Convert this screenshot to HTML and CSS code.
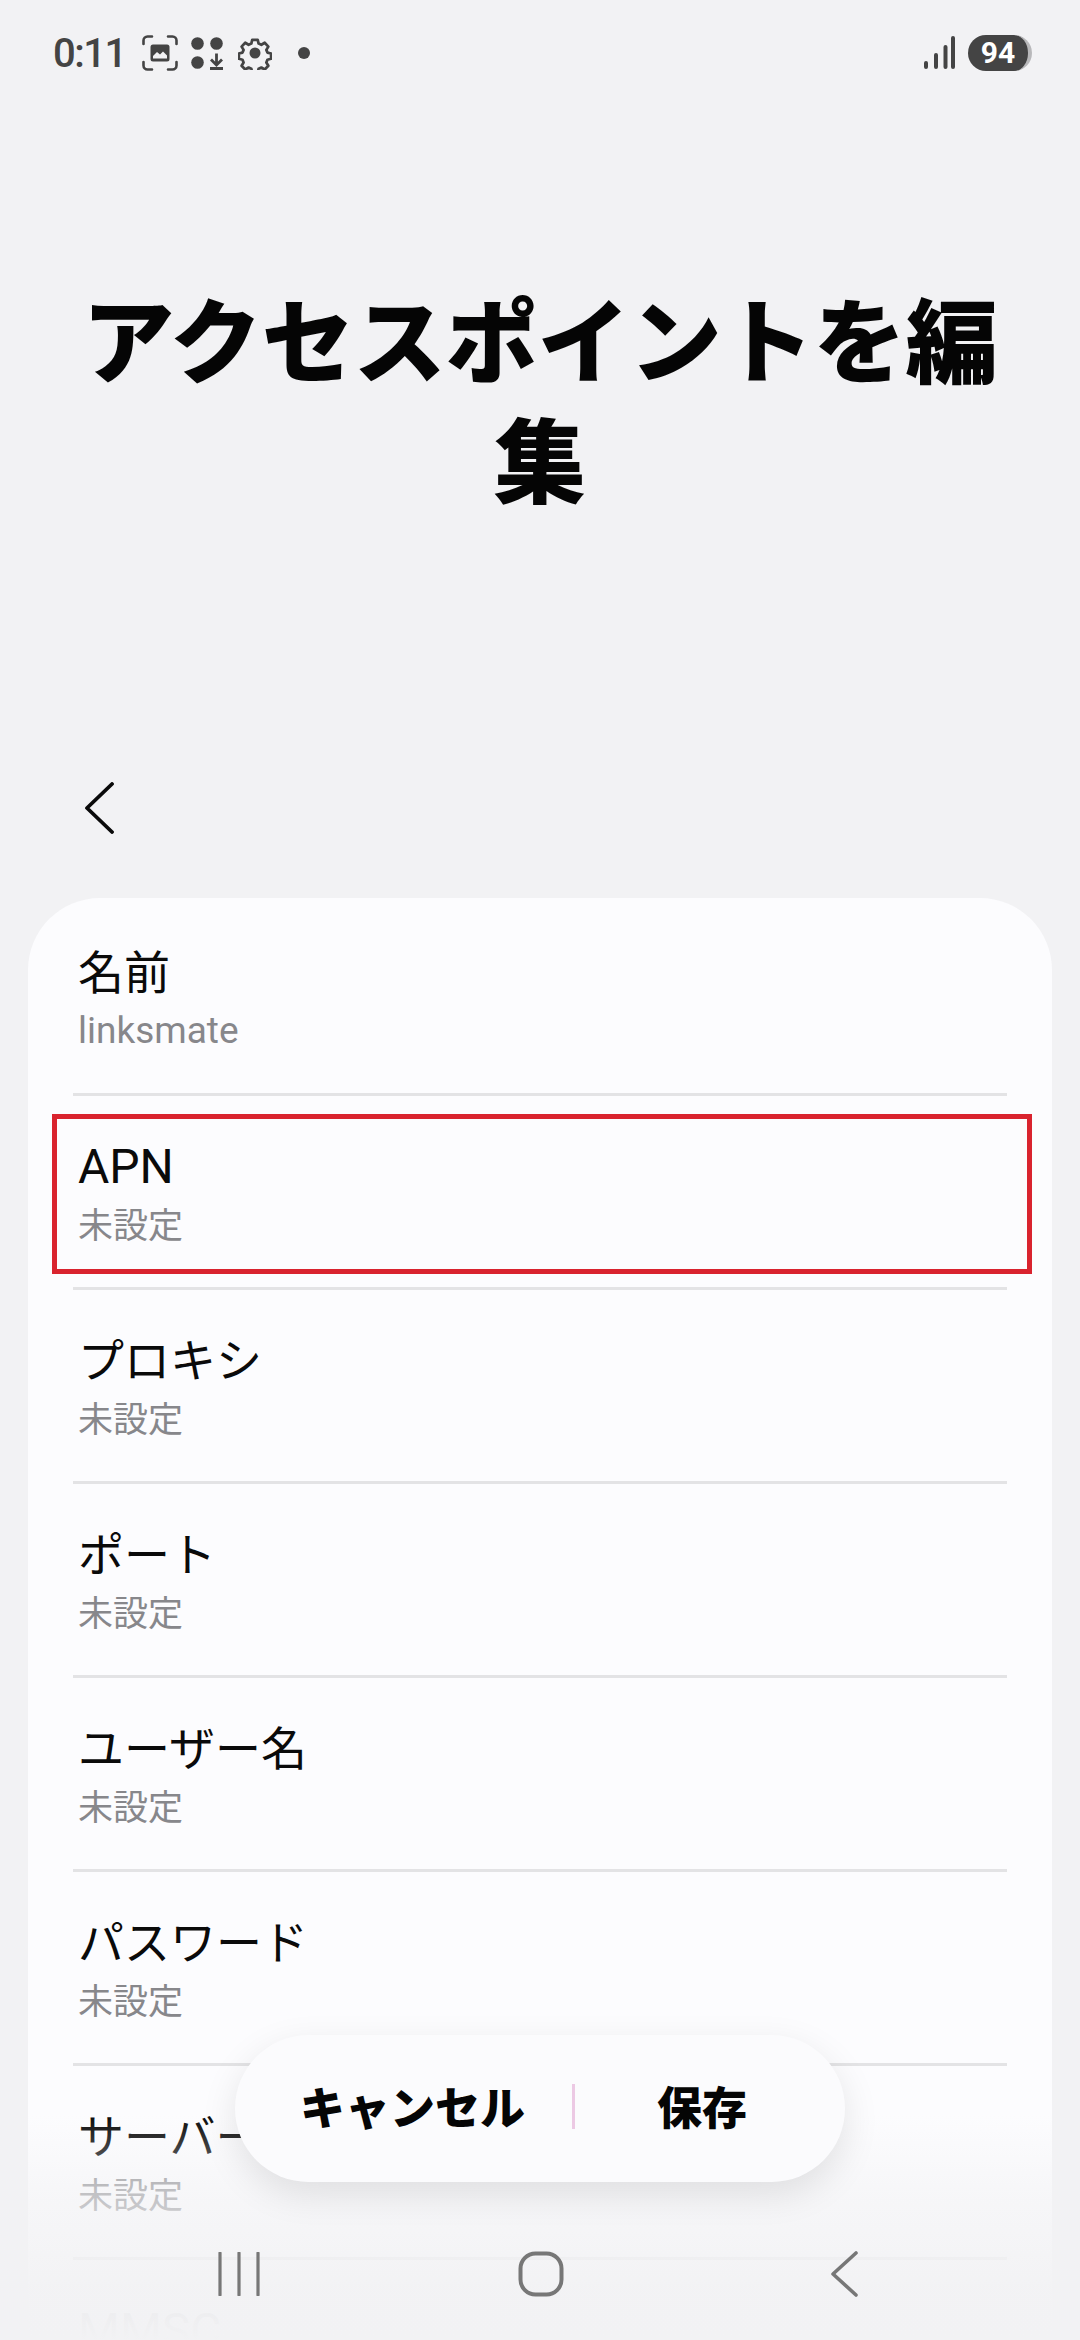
FILE: index.html
```html
<!DOCTYPE html>
<html lang="ja">
<head>
<meta charset="utf-8">
<title>アクセスポイントを編集</title>
<link rel="stylesheet" href="styles.css">
</head>
<body>
<div class="screen">
  <header class="status">
    <div class="status-left">
      <span class="time">0:11</span>
      <svg class="ic ic-shot" viewBox="0 0 36 36"><path d="M1.500 9V5.500a4 4 0 0 1 4-4H10M26 1.500h4.500a4 4 0 0 1 4 4V9M34.500 27v3.500a4 4 0 0 1-4 4H26M10 34.500H5.500a4 4 0 0 1-4-4V27" fill="none" stroke="#444" stroke-width="2.600" stroke-linecap="round"/><rect x="8.500" y="9.500" width="19" height="17" rx="2.500" fill="#444"/><path d="M11 23.500v-2.500l4-4 3 2.500 3-3 4 4v3z" fill="#f2f2f4"/></svg>
      <svg class="ic ic-apps" viewBox="0 0 33 33"><circle cx="6.500" cy="6.500" r="6.300" fill="#444"/><circle cx="25.500" cy="6.500" r="6.300" fill="#444"/><circle cx="6.500" cy="25.500" r="6.300" fill="#444"/><path d="M25.500 16.500v11M20 22.500l5.500 5.500 5.500-5.500M19 31.500h13" fill="none" stroke="#444" stroke-width="2.800"/></svg>
      <svg class="ic ic-gear" viewBox="0 0 34 34"><path d="M14 2.500h6l1 4.200 3 1.300 3.700-2.200 4 4.200-2.200 3.600 1.200 3 4 1v5.800l-4 1-1.200 3 2.200 3.600-4 4.200-3.700-2.200-3 1.300-1 4.200h-6l-1-4.200-3-1.300-3.700 2.200-4-4.200 2.200-3.600-1.200-3-4-1v-5.800l4-1 1.200-3-2.200-3.600 4-4.200 3.700 2.200 3-1.300z" transform="translate(1.500 1.500) scale(.91)" fill="none" stroke="#444" stroke-width="3" stroke-linejoin="round"/><circle cx="17" cy="17" r="5.500" fill="#444"/></svg>
      <span class="dot"></span>
    </div>
    <div class="status-right">
      <svg class="ic ic-signal" viewBox="0 0 32 34"><g stroke="#444" stroke-width="4" stroke-linecap="round"><path d="M3 27v4M13 19v12M22.500 11v20M30 2v29"/></g></svg>
      <span class="battery">94</span>
    </div>
  </header>

  <section class="hero">
    <h1>アクセスポイントを編集</h1>
  </section>

  <nav class="toolbar">
    <svg class="back" viewBox="0 0 30 52"><path d="M28 2 3 26l25 24" fill="none" stroke="#0a0a0a" stroke-width="3.800" stroke-linecap="round" stroke-linejoin="round"/></svg>
  </nav>

  <main class="card">
    <div class="row"><div class="label">名前</div><div class="value value-latin">linksmate</div></div>
    <div class="row"><div class="label label-latin">APN</div><div class="value">未設定</div><span class="marker"></span></div>
    <div class="row"><div class="label">プロキシ</div><div class="value">未設定</div></div>
    <div class="row"><div class="label">ポート</div><div class="value">未設定</div></div>
    <div class="row"><div class="label">ユーザー名</div><div class="value">未設定</div></div>
    <div class="row"><div class="label">パスワード</div><div class="value">未設定</div></div>
    <div class="row"><div class="label">サーバー</div><div class="value">未設定</div></div>
    <div class="row"><div class="label label-latin">MMSC</div></div>
  </main>

  <div class="fade"></div>

  <div class="actions">
    <span class="act act-cancel">キャンセル</span>
    <span class="sep"></span>
    <span class="act act-save">保存</span>
  </div>

  <div class="navbar">
    <svg class="nav-recent" viewBox="0 0 42 44"><path d="M2 1v42M21 1v42M40 1v42" stroke="#777" stroke-width="3.200" stroke-linecap="round"/></svg>
    <svg class="nav-home" viewBox="0 0 46 46"><rect x="2.500" y="2.500" width="41" height="41" rx="15" fill="none" stroke="#777" stroke-width="4"/></svg>
    <svg class="nav-back" viewBox="0 0 28 46"><path d="M26 2 3 23l23 21" fill="none" stroke="#777" stroke-width="3.600" stroke-linecap="round" stroke-linejoin="round"/></svg>
  </div>
</div>
</body>
</html>
```
FILE: styles.css
```css
* { box-sizing: border-box; }
html, body { margin: 0; padding: 0; }
body {
  background: #f2f2f4;
  font-family: "Roboto", "Noto Sans CJK JP", sans-serif;
  color: #0a0a0a;
}
.screen {
  position: relative;
  width: 1080px;
  height: 2340px;
  overflow: hidden;
  background: #f2f2f4;
}
.status {
  height: 106px;
  display: flex;
  align-items: center;
  justify-content: space-between;
  padding: 0 48px 0 53px;
}
.status-left { display: flex; align-items: center; }
.status-right { display: flex; align-items: center; gap: 13px; }
.time {
  font-size: 40px;
  font-weight: 500;
  color: #444;
  letter-spacing: -1.5px;
  margin-right: 16px;
}
.ic { display: block; }
.ic-shot { width: 36px; height: 36px; margin-right: 13px; }
.ic-apps { width: 33px; height: 33px; margin-right: 14px; }
.ic-gear { width: 34px; height: 34px; margin-right: 26px; }
.dot { width: 12px; height: 12px; border-radius: 50%; background: #444; }
.ic-signal { width: 32px; height: 34px; }
.battery {
  width: 64px;
  height: 36px;
  border-radius: 18px;
  background: #444;
  border-right: 4px solid #b8b8ba;
  color: #fff;
  font-size: 30px;
  font-weight: 700;
  line-height: 36px;
  text-align: center;
}
.hero {
  height: 580px;
  display: flex;
  align-items: center;
  justify-content: center;
  padding: 0 40px;
}
h1 {
  margin: 0;
  width: 940px;
  font-family: "Noto Sans CJK JP", sans-serif;
  font-size: 92px;
  font-weight: 900;
  line-height: 120px;
  text-align: center;
  color: #050505;
}
.toolbar {
  height: 212px;
  display: flex;
  align-items: flex-start;
  padding: 96px 0 0 84px;
}
.back { width: 30px; height: 52px; display: block; }
.card {
  margin: 0 28px;
  padding: 4px 45px 0;
  background: #fcfcfe;
  border-radius: 72px 72px 0 0;
}
.row {
  position: relative;
  height: 194px;
  padding: 41px 0 0 5px;
  border-bottom: 3px solid #e3e3e5;
}
.label {
  font-size: 46px;
  line-height: 60px;
  color: #0a0a0a;
}
.label-latin { font-size: 48px; }
.value {
  font-size: 35px;
  line-height: 50px;
  margin-top: 5px;
  color: #87878b;
}
.value-latin { font-size: 37px; margin-top: 3px; }
.marker {
  position: absolute;
  left: -21px;
  right: -25px;
  top: 18px;
  height: 160px;
  border: 5px solid #d9232e;
}
.fade {
  position: absolute;
  left: 0;
  right: 0;
  bottom: 0;
  height: 225px;
  background: linear-gradient(to bottom, rgba(242,242,244,0) 0%, rgba(242,242,244,.55) 35%, rgba(242,242,244,.97) 80%, #f2f2f4 100%);
}
.actions {
  position: absolute;
  left: 235px;
  top: 2035px;
  width: 610px;
  height: 147px;
  padding-bottom: 5px;
  border-radius: 74px;
  background: #fbfbfd;
  box-shadow: 0 12px 36px rgba(0,0,0,.10);
  display: flex;
  align-items: center;
}
.act {
  font-family: "Noto Sans CJK JP", sans-serif;
  font-size: 45px;
  font-weight: 900;
  line-height: 60px;
  color: #050505;
}
.act-cancel { margin-left: 65px; }
.sep { width: 3px; height: 45px; background: #ecc9e4; margin: 0 82px 0 47px; }
.navbar {
  position: absolute;
  left: 0;
  right: 0;
  top: 2252px;
  height: 44px;
}
.nav-recent { position: absolute; left: 218px; top: 0; width: 42px; height: 44px; }
.nav-home { position: absolute; left: 518px; top: -1px; width: 46px; height: 46px; }
.nav-back { position: absolute; left: 830px; top: -1px; width: 28px; height: 46px; }
```
